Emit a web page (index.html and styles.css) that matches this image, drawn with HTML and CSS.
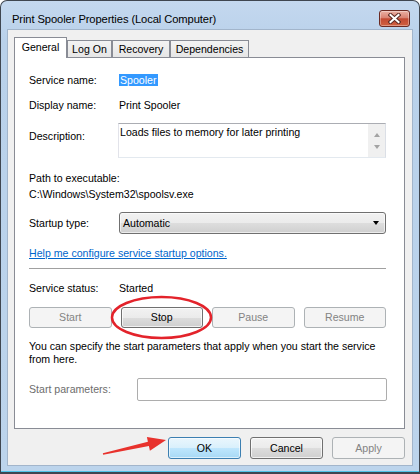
FILE: index.html
```html
<!DOCTYPE html>
<html lang="en">

<head>
    <meta charset="UTF-8">
    <title>Print Spooler Properties (Local Computer)</title>
    <link rel="stylesheet" href="styles.css">
</head>

<body>

    <div class="window">
        <div class="titlebar">
            <span class="title">Print Spooler Properties (Local Computer)</span>
            <div class="close-btn">
                <svg width="13" height="11" viewBox="0 0 13 11">
                    <path d="M2.5 2 L10.5 9 M10.5 2 L2.5 9" stroke="#5a2a24" stroke-width="4" stroke-linecap="square" />
                    <path d="M2.5 2 L10.5 9 M10.5 2 L2.5 9" stroke="#ffffff" stroke-width="2" stroke-linecap="square" />
                </svg>
            </div>
        </div>

        <div class="client">
            <div class="tabs">
                <div class="tab active tab-general">General</div>
                <div class="tab tab-logon">Log On</div>
                <div class="tab tab-recovery">Recovery</div>
                <div class="tab tab-deps">Dependencies</div>
            </div>

            <div class="panel">
                <div class="row row-name">
                    <span>Service name:</span>
                    <span><span class="selected">Spooler</span></span>
                </div>
                <div class="row row-display">
                    <span>Display name:</span>
                    <span>Print Spooler</span>
                </div>
                <div class="row row-desc">
                    <span class="desc-label">Description:</span>
                    <div class="textbox">
                        <div class="textbox-text">Loads files to memory for later printing</div>
                        <div class="scrollbar">
                            <span class="arrow-up"></span>
                            <span class="arrow-down"></span>
                        </div>
                    </div>
                </div>
                <div class="path-label">Path to executable:</div>
                <div class="path">C:\Windows\System32\spoolsv.exe</div>
                <div class="row row-startup">
                    <span>Startup type:</span>
                    <div class="combo">
                        <span>Automatic</span>
                        <span class="combo-arrow"></span>
                    </div>
                </div>
                <a class="help-link" href="#">Help me configure service startup options.</a>
                <div class="separator"></div>
                <div class="row row-status">
                    <span>Service status:</span>
                    <span>Started</span>
                </div>
                <div class="service-buttons">
                    <div class="btn disabled">Start</div>
                    <div class="btn">Stop</div>
                    <div class="btn disabled">Pause</div>
                    <div class="btn disabled">Resume</div>
                </div>
                <p class="note">You can specify the start parameters that apply when you start the service from here.</p>
                <div class="row row-params">
                    <span class="muted">Start parameters:</span>
                    <div class="input"></div>
                </div>
            </div>

            <div class="dialog-buttons">
                <div class="btn default">OK</div>
                <div class="btn">Cancel</div>
                <div class="btn disabled">Apply</div>
            </div>
        </div>

        <!-- red annotations drawn over the dialog -->
        <svg class="mark-ellipse" width="106" height="48" viewBox="0 0 106 48">
            <ellipse cx="52.5" cy="23.5" rx="49.5" ry="20.5" fill="none" stroke="#e3232b" stroke-width="2.5" />
        </svg>
        <svg class="mark-arrow" width="72" height="30" viewBox="0 0 72 30">
            <polygon points="3.85,22.3 48.9,10.75 47.9,6.1 67,9 50.9,19.7 49.9,15.05 4.15,23.7" fill="#e8322d" />
        </svg>
    </div>

</body>

</html>
```

FILE: styles.css
```css
* {
    margin: 0;
    padding: 0;
    box-sizing: border-box;
}

body {
    background: #ffffff;
    font-family: "Liberation Sans", Arial, sans-serif;
    font-size: 10.6px;
    color: #000000;
}

.window {
    position: relative;
    width: 420px;
    height: 474px;
    border: 1px solid #3f4650;
    border-bottom-width: 2px;
    border-radius: 7px 7px 0 0;
    background: linear-gradient(#c4d8ef, #b9d1ea 40px, #bcd4ec);
    box-shadow: inset 0 -1px 0 #4fc3e6;
    padding: 0 6px 6px 6px;
    display: flex;
    flex-direction: column;
}

/* title bar */

.titlebar {
    height: 28px;
    display: flex;
    justify-content: space-between;
    align-items: flex-start;
}

.title {
    font-size: 11.2px;
    letter-spacing: -0.1px;
    line-height: 15px;
    margin: 11px 0 0 5px;
    color: #000000;
}

.close-btn {
    width: 31px;
    height: 17px;
    margin: 9px 3px 0 0;
    border: 1px solid #6b2a22;
    border-radius: 3px;
    background: linear-gradient(#eab1a4, #d98372 45%, #c24a33 52%, #d0603f 100%);
    box-shadow: inset 0 0 0 1px rgba(255, 255, 255, 0.35);
    display: flex;
    justify-content: center;
    align-items: center;
}

/* client area */

.client {
    flex: 1;
    border: 1px solid #a2b5cb;
    background: #f0f0f0;
    padding: 7px 7px 6px 6px;
    display: flex;
    flex-direction: column;
}

.tabs {
    height: 20px;
    display: flex;
    align-items: flex-end;
}

.tab {
    height: 17px;
    border: 1px solid #898c95;
    border-bottom: none;
    background: linear-gradient(#f3f3f3, #e6e6e6);
    text-align: center;
    line-height: 16px;
}

.tab.active {
    position: relative;
    z-index: 1;
    height: 21px;
    margin-bottom: -1px;
    background: #ffffff;
    line-height: 18px;
}

.tab-general {
    width: 53px;
}

.tab-logon {
    width: 45px;
}

.tab-recovery {
    width: 58px;
}

.tab-deps {
    width: 79px;
}

.panel {
    height: 372px;
    border: 1px solid #898c95;
    background: #ffffff;
    padding: 14px 18px 0 14px;
}

.row {
    display: grid;
    grid-template-columns: 90px 1fr;
    line-height: 16px;
}

.row-display {
    margin-top: 9px;
}

.row-desc {
    margin-top: 10px;
}

.desc-label {
    padding-top: 5px;
}

.textbox {
    height: 35px;
    margin-left: -1px;
    border: 1px solid;
    border-color: #abadb3 #dbdfe6 #e3e9ef #e2e3ea;
    display: flex;
}

.textbox-text {
    flex: 1;
    padding: 1px 1px;
    line-height: 14px;
}

.scrollbar {
    width: 17px;
    background: #f0f0f0;
    display: flex;
    flex-direction: column;
    align-items: center;
    justify-content: space-between;
    padding: 9px 0 8px;
}

.arrow-up {
    border-left: 3.5px solid transparent;
    border-right: 3.5px solid transparent;
    border-bottom: 4px solid #a3a3a3;
}

.arrow-down {
    border-left: 3.5px solid transparent;
    border-right: 3.5px solid transparent;
    border-top: 4px solid #a3a3a3;
}

.path-label {
    margin-top: 12px;
    line-height: 16px;
}

.path {
    line-height: 16px;
}

.row-startup {
    margin-top: 10px;
    line-height: 22px;
}

.combo {
    height: 22px;
    border: 1px solid #707070;
    border-radius: 3px;
    background: linear-gradient(#f2f2f2 0%, #ebebeb 50%, #dddddd 51%, #cfcfcf 100%);
    box-shadow: inset 0 0 0 1px rgba(255, 255, 255, 0.6);
    padding: 0 6px 0 3px;
    display: flex;
    justify-content: space-between;
    align-items: center;
    line-height: 20px;
}

.combo-arrow {
    border-left: 3.5px solid transparent;
    border-right: 3.5px solid transparent;
    border-top: 4px solid #000000;
}

.help-link {
    display: block;
    margin-top: 11px;
    line-height: 16px;
    color: #0066cc;
    text-decoration: underline;
}

.separator {
    margin-top: 7px;
    height: 1px;
    background: #a0a0a0;
}

.row-status {
    margin-top: 11px;
}

.selected {
    background: #3399ff;
    color: #ffffff;
    padding: 0 1px;
}

/* buttons */

.service-buttons {
    margin-top: 11px;
    display: grid;
    grid-template-columns: repeat(4, 1fr);
    gap: 9px;
}

.btn {
    height: 21px;
    border: 1px solid #707070;
    border-radius: 3px;
    background: linear-gradient(#f2f2f2 0%, #ebebeb 50%, #dddddd 51%, #cfcfcf 100%);
    box-shadow: inset 0 0 0 1px rgba(255, 255, 255, 0.7);
    text-align: center;
    line-height: 19px;
}

.btn.disabled {
    border-color: #adb2b5;
    background: #f4f4f4;
    box-shadow: none;
    color: #838383;
}

.btn.default {
    border-color: #3c7fb1;
    background: linear-gradient(#eaf6fd 0%, #d9f0fc 50%, #bee6fd 51%, #a7d9f5 100%);
    box-shadow: inset 0 0 0 1px rgba(255, 255, 255, 0.6);
}

.note {
    margin-top: 12px;
    line-height: 13px;
}

.row-params {
    margin-top: 12px;
    grid-template-columns: 108px 1fr;
    line-height: 23px;
}

.muted {
    color: #6d6d6d;
}

.input {
    height: 23px;
    border: 1px solid #adadad;
    border-radius: 2px;
    margin-right: -1px;
}

.dialog-buttons {
    margin-top: 8px;
    display: flex;
    justify-content: flex-end;
    gap: 9px;
}

.dialog-buttons .btn {
    width: 73px;
    height: 22px;
    line-height: 20px;
}

/* annotations */

.mark-ellipse {
    position: absolute;
    left: 108px;
    top: 293px;
}

.mark-arrow {
    position: absolute;
    left: 98px;
    top: 430px;
}
```
